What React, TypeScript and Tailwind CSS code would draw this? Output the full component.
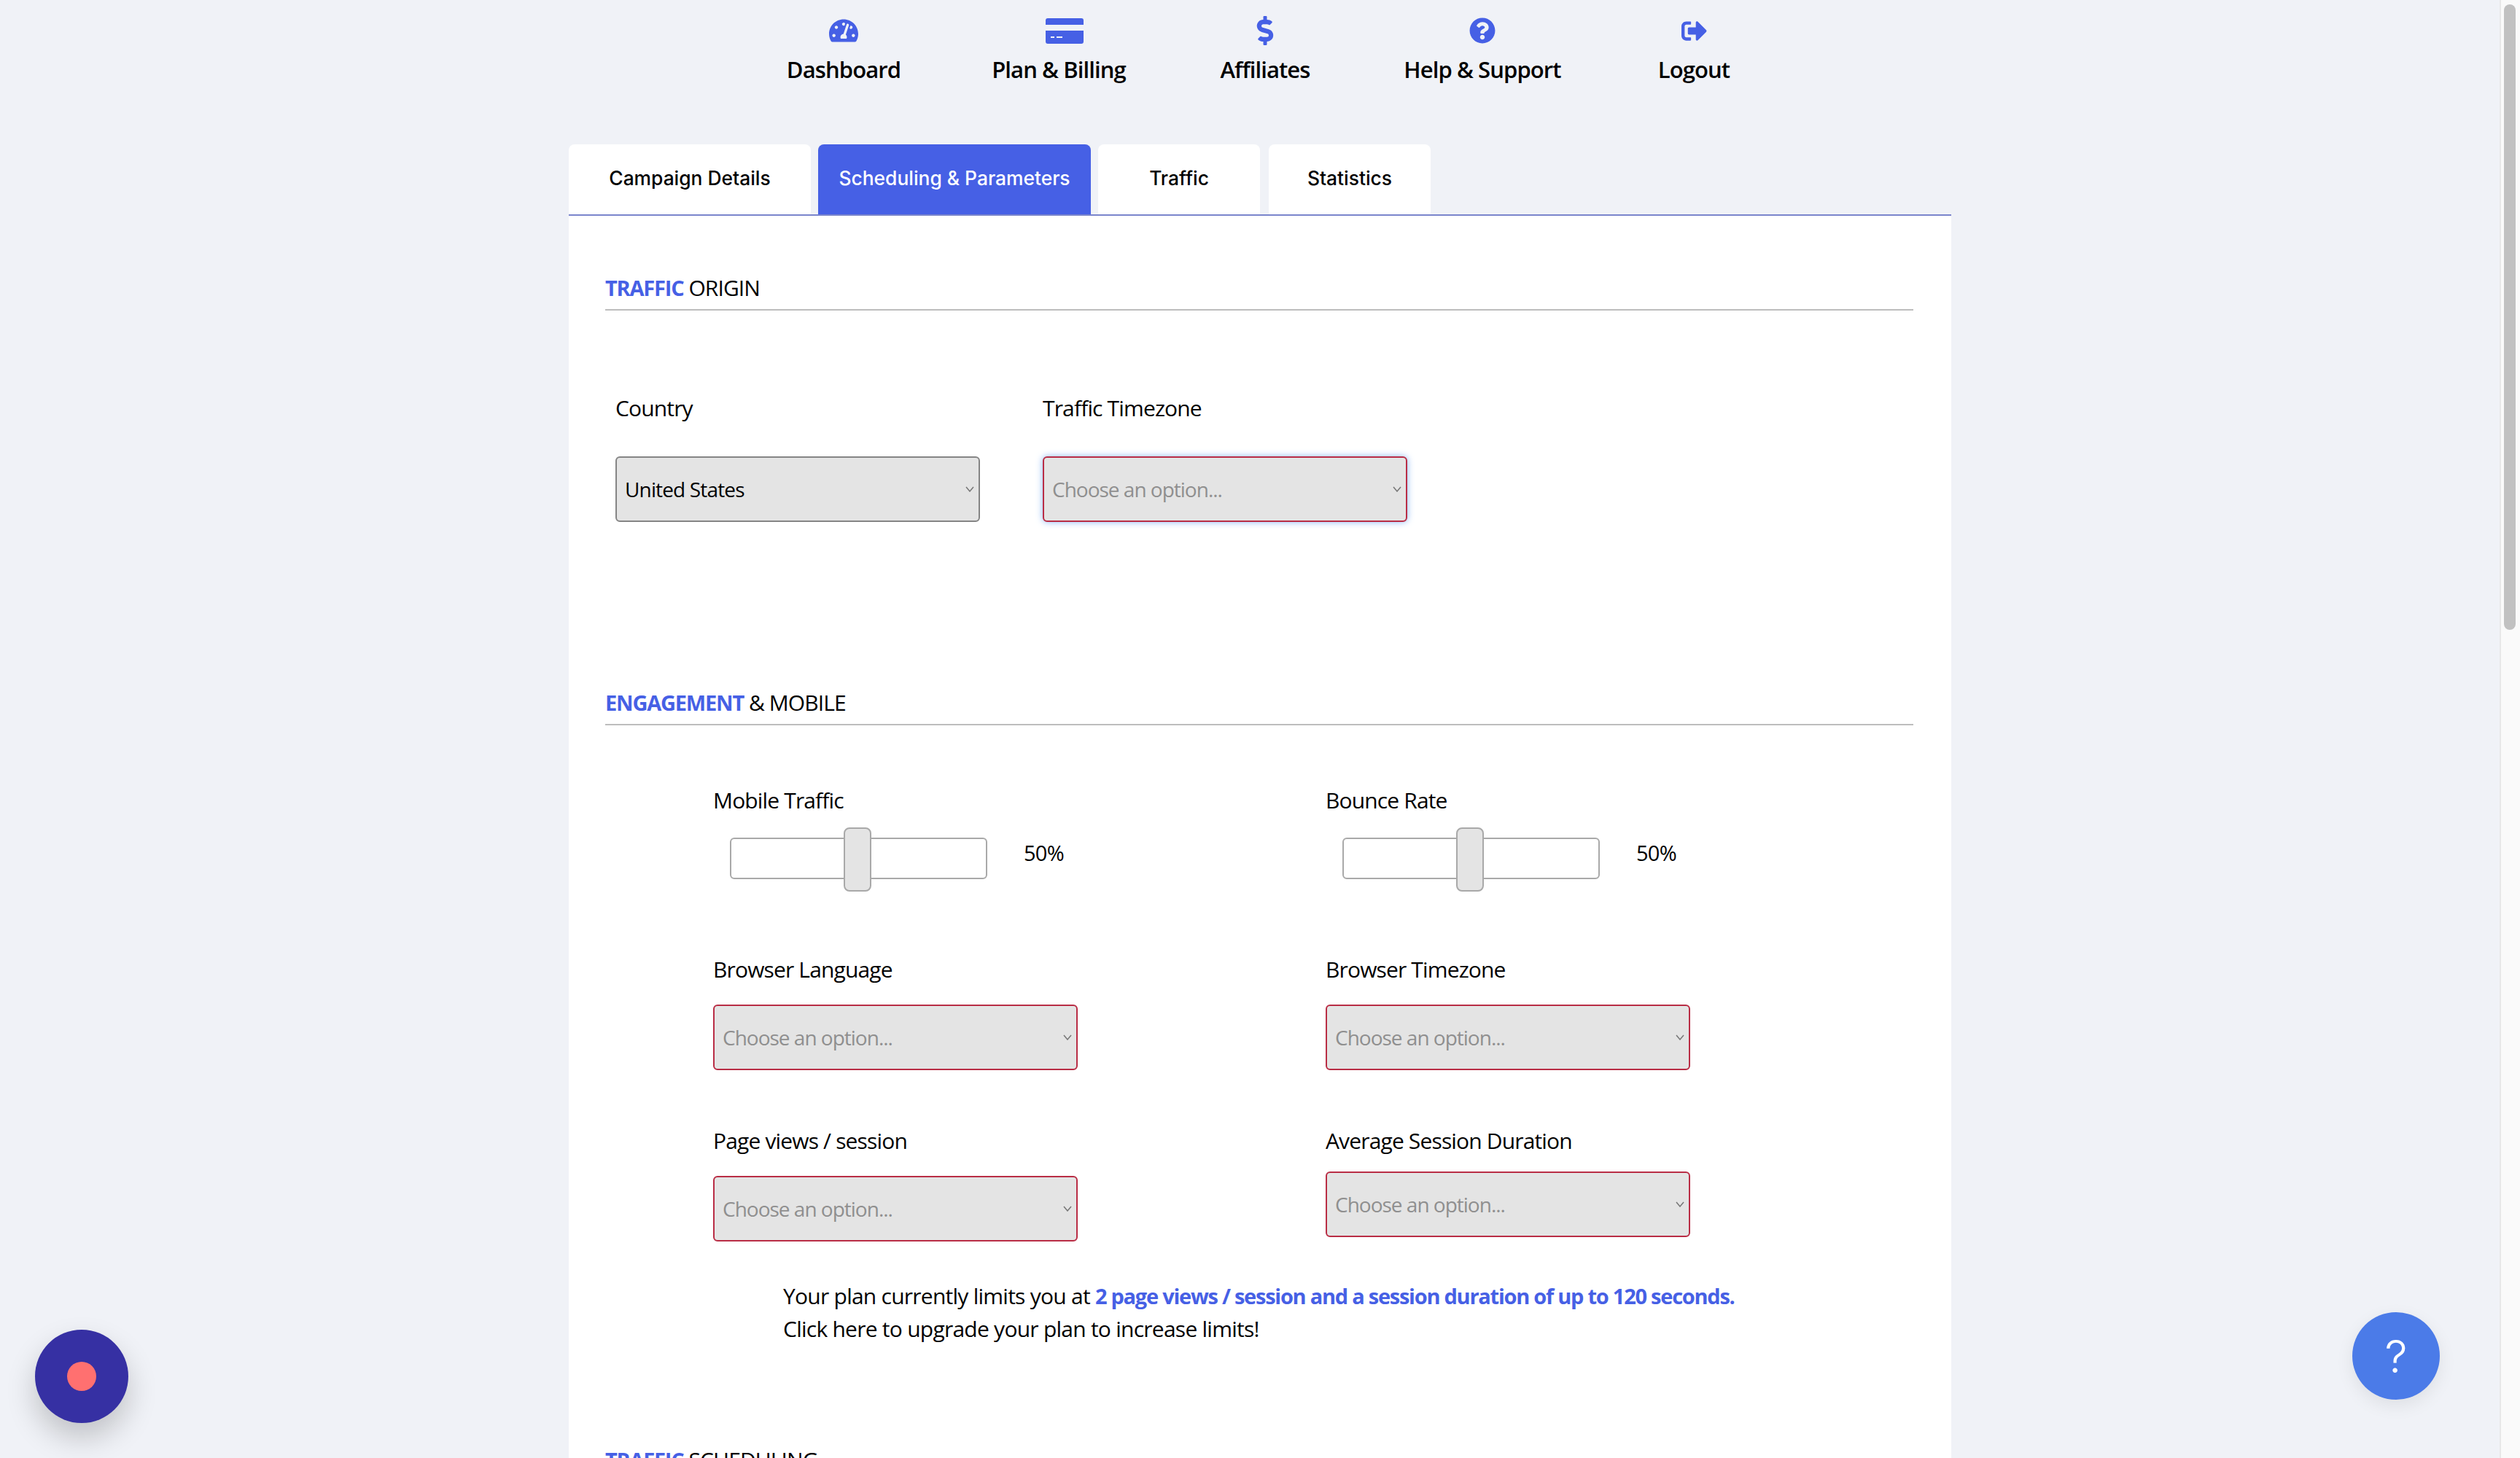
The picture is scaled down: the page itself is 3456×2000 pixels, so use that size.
import React from 'react';
import { FaTachometerAlt, FaDollarSign, FaQuestionCircle, FaSignOutAlt } from 'react-icons/fa';

const body = 'font-["Open_Sans",sans-serif]';

const CardIcon = () => (
  <svg viewBox="0 0 52 35" className="ml-[16px] w-[52px] h-[35px] fill-[#4660e5]">
    <path d="M3 0h46a3 3 0 0 1 3 3v6H0V3a3 3 0 0 1 3-3z" />
    <path fillRule="evenodd" d="M0 17h52v15a3 3 0 0 1-3 3H3a3 3 0 0 1-3-3V17zm7 8v2h5v-2H7zm8 0v2h8v-2h-8z" />
  </svg>
);

const navItems = [
  { label: 'Dashboard', width: 'w-[280px]', icon: <FaTachometerAlt className="text-[40px]" /> },
  { label: 'Plan & Billing', width: 'w-[310px]', icon: <CardIcon /> },
  { label: 'Affiliates', width: 'w-[256px]', icon: <FaDollarSign className="text-[40px]" /> },
  { label: 'Help & Support', width: 'w-[340px]', icon: <FaQuestionCircle className="text-[36px]" /> },
  { label: 'Logout', width: 'w-[240px]', icon: <FaSignOutAlt className="text-[35px]" /> },
];

const tabs = [
  { label: 'Campaign Details', width: 'w-[332px]' },
  { label: 'Scheduling & Parameters', width: 'w-[374px]', active: true },
  { label: 'Traffic', width: 'w-[222px]' },
  { label: 'Statistics', width: 'w-[222px] ml-[2px]' },
];

const SectionTitle = ({ blue, rest, className }: { blue: string; rest: string; className: string }) => (
  <div className={`${className} ml-[50px] mr-[52px] h-[51px] border-b-2 border-[#bdbdbd] text-[30px] leading-[40px] tracking-[-0.9px]`}>
    <span className="text-[29px] font-bold text-[#4660e5] tracking-[-1.2px]">{blue}</span> <span className="text-black">{rest}</span>
  </div>
);

const Select = ({ value, glow, plain, className }: { value?: string; glow?: boolean; plain?: boolean; className?: string }) => (
  <div
    className={`${className ?? ''} w-[500px] h-[90px] flex items-center justify-between pl-[11px] pr-[6px] rounded-[6px] bg-[#e4e4e4] border-2 ${
      plain ? 'border-[#858585]' : 'border-[#b92d45]'
    } ${glow ? 'shadow-[0_0_10px_rgba(110,165,245,0.8)]' : ''}`}
  >
    <span className={`text-[28px] ${value ? 'text-black tracking-[-0.85px]' : 'text-[#8f8f8f] tracking-[-1px]'}`}>{value ?? 'Choose an option...'}</span>
    <svg viewBox="0 0 12 8" className="w-[12px] h-[8px] fill-none stroke-[#777] stroke-[1.5]">
      <path d="M1 1l5 6 5-6" />
    </svg>
  </div>
);

const Label = ({ children, className }: { children: React.ReactNode; className?: string }) => (
  <div className={`${className ?? ''} h-[40px] text-[30px] leading-[40px] tracking-[-0.85px] text-black`}>{children}</div>
);

const Slider = () => (
  <div className="mt-[31px] ml-[23px] flex items-center">
    <div className="relative w-[353px] h-[57px] rounded-[6px] border-2 border-[#a9a9a9] bg-white">
      <div className="absolute left-[154px] top-[-16px] w-[38px] h-[88px] rounded-[8px] border-2 border-[#a9a9a9] bg-[#e4e4e4]" />
    </div>
    <span className="ml-[50px] mb-[16px] text-[29px] leading-[40px] tracking-[-0.75px] text-black">50%</span>
  </div>
);

export default function App() {
  return (
    <div className={`${body} relative h-[2000px] overflow-hidden bg-[#f0f2f7] flex`}>
      <div className="flex-1 min-w-0">
        <nav className="h-[198px] pl-[1017px] flex items-start">
          {navItems.map((item) => (
            <div key={item.label} className={`${item.width} flex flex-col items-center text-[#4660e5]`}>
              <div className="h-[76px] flex items-center pt-[8px]">{item.icon}</div>
              <div className="text-[31px] leading-[38px] font-semibold tracking-[-0.9px] text-black">{item.label}</div>
            </div>
          ))}
        </nav>

        <div className="ml-[780px] w-[1896px]">
          <div className="flex gap-[10px] h-[98px] border-b-2 border-[#7a85cc]">
            {tabs.map((t) => (
              <div
                key={t.label}
                className={`${t.width} h-[96px] pb-[2px] flex items-center justify-center rounded-t-[8px] font-["Inter",sans-serif] font-medium text-[26.4px] ${
                  t.active ? 'bg-[#4660e5] text-white' : 'bg-white text-black'
                }`}
              >
                {t.label}
              </div>
            ))}
          </div>

          <div className="bg-white h-[1704px] overflow-hidden">
            <SectionTitle blue="TRAFFIC" rest="ORIGIN" className="mt-[79px]" />

            <div className="mt-[114px] ml-[64px] flex gap-[86px]">
              <div>
                <Label>Country</Label>
                <Select value="United States" plain className="mt-[46px]" />
              </div>
              <div>
                <Label>Traffic Timezone</Label>
                <Select glow className="mt-[46px]" />
              </div>
            </div>

            <SectionTitle blue="ENGAGEMENT" rest="& MOBILE" className="mt-[228px]" />

            <div className="mt-[83px] ml-[198px] grid grid-cols-[840px_500px]">
              <div>
                <Label>Mobile Traffic</Label>
                <Slider />
                <Label className="mt-[104px]">Browser Language</Label>
                <Select className="mt-[28px]" />
                <Label className="mt-[77px]">Page views / session</Label>
                <Select className="mt-[28px]" />
              </div>
              <div>
                <Label>Bounce Rate</Label>
                <Slider />
                <Label className="mt-[104px]">Browser Timezone</Label>
                <Select className="mt-[28px]" />
                <Label className="mt-[77px]">Average Session Duration</Label>
                <Select className="mt-[22px]" />
              </div>
            </div>

            <div className="mt-[52px] ml-[294px] text-[30px] leading-[45px] tracking-[-0.75px] text-black">
              <div>
                Your plan currently limits you at{' '}
                <span className="text-[29px] font-bold text-[#4660e5] tracking-[-1.25px]">2 page views / session and a session duration of up to 120 seconds.</span>
              </div>
              <div>Click here to upgrade your plan to increase limits!</div>
            </div>

            <SectionTitle blue="TRAFFIC" rest="SCHEDULING" className="mt-[138px]" />
          </div>
        </div>
      </div>

      <aside className="w-[28px] h-full bg-[#fafafa] border-l-2 border-[#e8e8e8] pt-[6px] pl-[4px]">
        <div className="w-[16px] h-[858px] rounded-full bg-[#c1c1c1]" />
      </aside>

      <div className="absolute left-[48px] top-[1824px] w-[128px] h-[128px] rounded-full bg-[#3630a3] shadow-[0_20px_40px_rgba(0,0,0,0.2)] flex items-center justify-center">
        <div className="w-[40px] h-[40px] rounded-full bg-[#ff7070]" />
      </div>
      <div className="absolute left-[3226px] top-[1800px] w-[120px] h-[120px] rounded-full bg-[#4b7be8] shadow-[0_8px_24px_rgba(0,0,0,0.08)] flex items-center justify-center font-['Inter',sans-serif] text-[62px] font-light text-white">
        ?
      </div>
    </div>
  );
}
